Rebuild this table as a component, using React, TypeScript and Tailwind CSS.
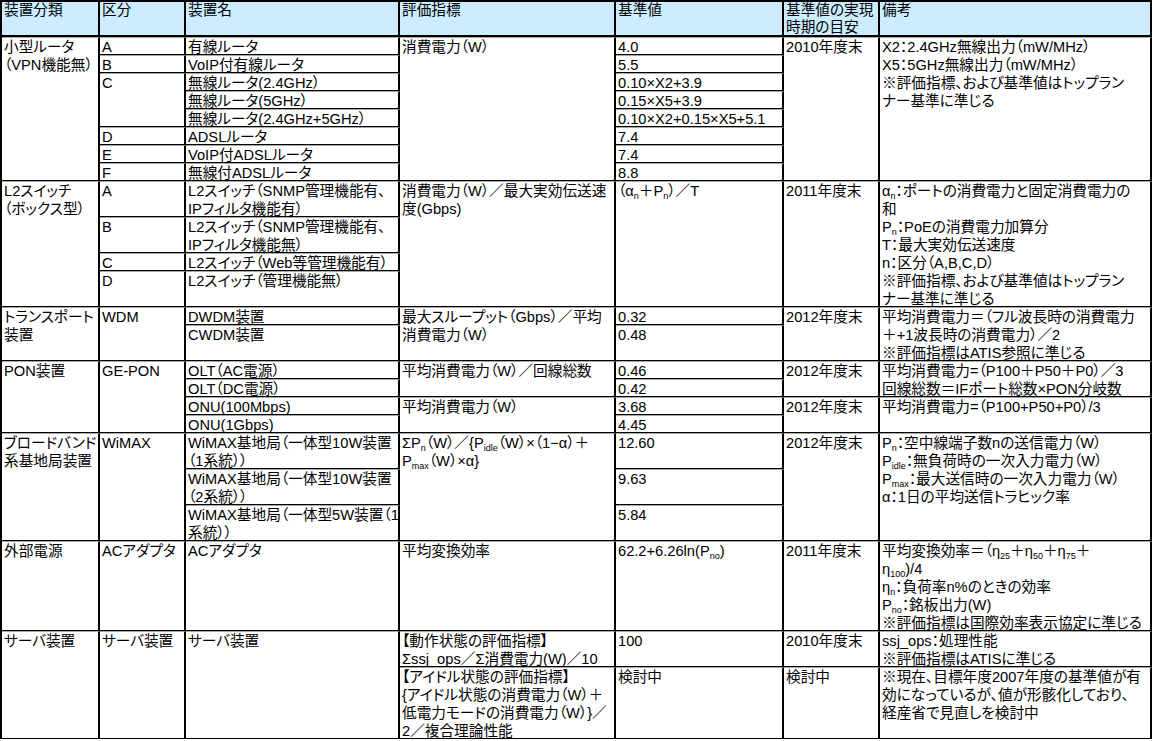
import type { ReactNode } from "react";
import { clsx } from "clsx";

type Cell = { span: number; lines: ReactNode[] };
type Group = Cell[][];

const colWidths = [
  "w-[98px]",
  "w-[86px]",
  "w-[214px]",
  "w-[216px]",
  "w-[168px]",
  "w-[96px]",
  "w-[272px]",
];

const heights: Record<number, string> = {
  1: "h-[18px]",
  2: "h-[36px]",
  3: "h-[54px]",
  4: "h-[72px]",
  5: "h-[90px]",
  6: "h-[108px]",
  7: "h-[126px]",
  8: "h-[144px]",
};

const Sub = ({ children }: { children: ReactNode }) => (
  <sub className="text-[9px] bottom-[-0.3em]">{children}</sub>
);

const c = (span: number, ...lines: ReactNode[]): Cell => ({ span, lines });

const headers: ReactNode[][] = [
  ["装置分類"],
  ["区分"],
  ["装置名"],
  ["評価指標"],
  ["基準値"],
  ["基準値の実現", "時期の目安"],
  ["備考"],
];

const groups: Group[] = [
  [
    [c(8, "小型ルータ", "（VPN機能無）")],
    [c(1, "A"), c(1, "B"), c(3, "C"), c(1, "D"), c(1, "E"), c(1, "F")],
    [
      c(1, "有線ルータ"),
      c(1, "VoIP付有線ルータ"),
      c(1, "無線ルータ(2.4GHz）"),
      c(1, "無線ルータ(5GHz）"),
      c(1, "無線ルータ(2.4GHz+5GHz）"),
      c(1, "ADSLルータ"),
      c(1, "VoIP付ADSLルータ"),
      c(1, "無線付ADSLルータ"),
    ],
    [c(8, "消費電力（W）")],
    [
      c(1, "4.0"),
      c(1, "5.5"),
      c(1, "0.10×X2+3.9"),
      c(1, "0.15×X5+3.9"),
      c(1, "0.10×X2+0.15×X5+5.1"),
      c(1, "7.4"),
      c(1, "7.4"),
      c(1, "8.8"),
    ],
    [c(8, "2010年度末")],
    [
      c(
        8,
        "X2：2.4GHz無線出力（mW/MHz）",
        "X5：5GHz無線出力（mW/MHz）",
        "※評価指標、および基準値はトップラン",
        "ナー基準に準じる"
      ),
    ],
  ],
  [
    [c(7, "L2スイッチ", "（ボックス型）")],
    [c(2, "A"), c(2, "B"), c(1, "C"), c(2, "D")],
    [
      c(2, "L2スイッチ（SNMP管理機能有、", "IPフィルタ機能有）"),
      c(2, "L2スイッチ（SNMP管理機能有、", "IPフィルタ機能無）"),
      c(1, "L2スイッチ（Web等管理機能有）"),
      c(2, "L2スイッチ（管理機能無）"),
    ],
    [c(7, "消費電力（W）／最大実効伝送速", "度(Gbps)")],
    [
      c(
        7,
        <>
          （α<Sub>n</Sub>＋P<Sub>n</Sub>）／T
        </>
      ),
    ],
    [c(7, "2011年度末")],
    [
      c(
        7,
        <>
          α<Sub>n</Sub>：ポートの消費電力と固定消費電力の
        </>,
        "和",
        <>
          P<Sub>n</Sub>：PoEの消費電力加算分
        </>,
        "T：最大実効伝送速度",
        "n：区分（A,B,C,D）",
        "※評価指標、および基準値はトップラン",
        "ナー基準に準じる"
      ),
    ],
  ],
  [
    [c(3, "トランスポート", "装置")],
    [c(3, "WDM")],
    [c(1, "DWDM装置"), c(2, "CWDM装置")],
    [c(3, "最大スループット（Gbps）／平均", "消費電力（W）")],
    [c(1, "0.32"), c(2, "0.48")],
    [c(3, "2012年度末")],
    [
      c(
        3,
        "平均消費電力＝（フル波長時の消費電力",
        "＋+1波長時の消費電力）／2",
        "※評価指標はATIS参照に準じる"
      ),
    ],
  ],
  [
    [c(4, "PON装置")],
    [c(4, "GE-PON")],
    [
      c(1, "OLT（AC電源）"),
      c(1, "OLT（DC電源）"),
      c(1, "ONU(100Mbps)"),
      c(1, "ONU(1Gbps)"),
    ],
    [c(2, "平均消費電力（W）／回線総数"), c(2, "平均消費電力（W）")],
    [c(1, "0.46"), c(1, "0.42"), c(1, "3.68"), c(1, "4.45")],
    [c(2, "2012年度末"), c(2, "2012年度末")],
    [
      c(2, "平均消費電力=（P100＋P50＋P0）／3", "回線総数＝IFポート総数×PON分岐数"),
      c(2, "平均消費電力=（P100+P50+P0）/3"),
    ],
  ],
  [
    [c(6, "ブロードバンド", "系基地局装置")],
    [c(6, "WiMAX")],
    [
      c(2, "WiMAX基地局（一体型10W装置", "（1系統））"),
      c(2, "WiMAX基地局（一体型10W装置", "（2系統））"),
      c(2, "WiMAX基地局（一体型5W装置（1", "系統））"),
    ],
    [
      c(
        6,
        <>
          ΣP<Sub>n</Sub>（W）／{"{"}P<Sub>idle</Sub>（W）×（1−α）＋
        </>,
        <>
          P<Sub>max</Sub>（W）×α{"}"}
        </>
      ),
    ],
    [c(2, "12.60"), c(2, "9.63"), c(2, "5.84")],
    [c(6, "2012年度末")],
    [
      c(
        6,
        <>
          P<Sub>n</Sub>：空中線端子数nの送信電力（W）
        </>,
        <>
          P<Sub>idle</Sub>：無負荷時の一次入力電力（W）
        </>,
        <>
          P<Sub>max</Sub>：最大送信時の一次入力電力（W）
        </>,
        "α：1日の平均送信トラヒック率"
      ),
    ],
  ],
  [
    [c(5, "外部電源")],
    [c(5, "ACアダプタ")],
    [c(5, "ACアダプタ")],
    [c(5, "平均変換効率")],
    [
      c(
        5,
        <>
          62.2+6.26ln(P<Sub>no</Sub>)
        </>
      ),
    ],
    [c(5, "2011年度末")],
    [
      c(
        5,
        <>
          平均変換効率＝（η<Sub>25</Sub>＋η<Sub>50</Sub>＋η<Sub>75</Sub>＋
        </>,
        <>
          η<Sub>100</Sub>)/4
        </>,
        <>
          η<Sub>n</Sub>：負荷率n%のときの効率
        </>,
        <>
          P<Sub>no</Sub>：銘板出力(W)
        </>,
        "※評価指標は国際効率表示協定に準じる"
      ),
    ],
  ],
  [
    [c(6, "サーバ装置")],
    [c(6, "サーバ装置")],
    [c(6, "サーバ装置")],
    [
      c(2, "【動作状態の評価指標】", "Σssj_ops／Σ消費電力(W)／10"),
      c(
        4,
        "【アイドル状態の評価指標】",
        "{アイドル状態の消費電力（W）＋",
        "低電力モードの消費電力（W）}／",
        "2／複合理論性能"
      ),
    ],
    [c(2, "100"), c(4, "検討中")],
    [c(2, "2010年度末"), c(4, "検討中")],
    [
      c(2, "ssj_ops：処理性能", "※評価指標はATISに準じる"),
      c(
        4,
        "※現在、目標年度2007年度の基準値が有",
        "効になっているが、値が形骸化しており、",
        "経産省で見直しを検討中"
      ),
    ],
  ],
];

const cellBase =
  "border-r-2 border-b border-t border-black border-t-[#a8a8a8] px-[2px] leading-[18px] whitespace-nowrap";

export default function App() {
  return (
    <div className="min-h-screen bg-white text-black">
      <div className="w-[1154px] font-['Liberation_Sans','Noto_Sans_CJK_JP',sans-serif] text-[14.67px] [font-feature-settings:'palt']">
        <div className="w-[1152px] border-l-2 border-t-2 border-black">
          <div className="flex bg-[#ccecff]">
            {headers.map((lines, i) => (
              <div key={i} className={clsx(colWidths[i], "h-[35px] shrink-0 border-r-2 border-b-2 border-black px-[2px] leading-[17px]")}>
                {lines.map((line, j) => (
                  <div key={j}>{line}</div>
                ))}
              </div>
            ))}
          </div>
          {groups.map((group, g) => (
            <div key={g} className="flex">
              {group.map((cells, i) => (
                <div key={i} className={clsx(colWidths[i], "flex shrink-0 flex-col")}>
                  {cells.map((cell, k) => (
                    <div key={k} className={clsx(heights[cell.span], cellBase)}>
                      {cell.lines.map((line, j) => (
                        <div key={j}>{line}</div>
                      ))}
                    </div>
                  ))}
                </div>
              ))}
            </div>
          ))}
        </div>
      </div>
    </div>
  );
}
